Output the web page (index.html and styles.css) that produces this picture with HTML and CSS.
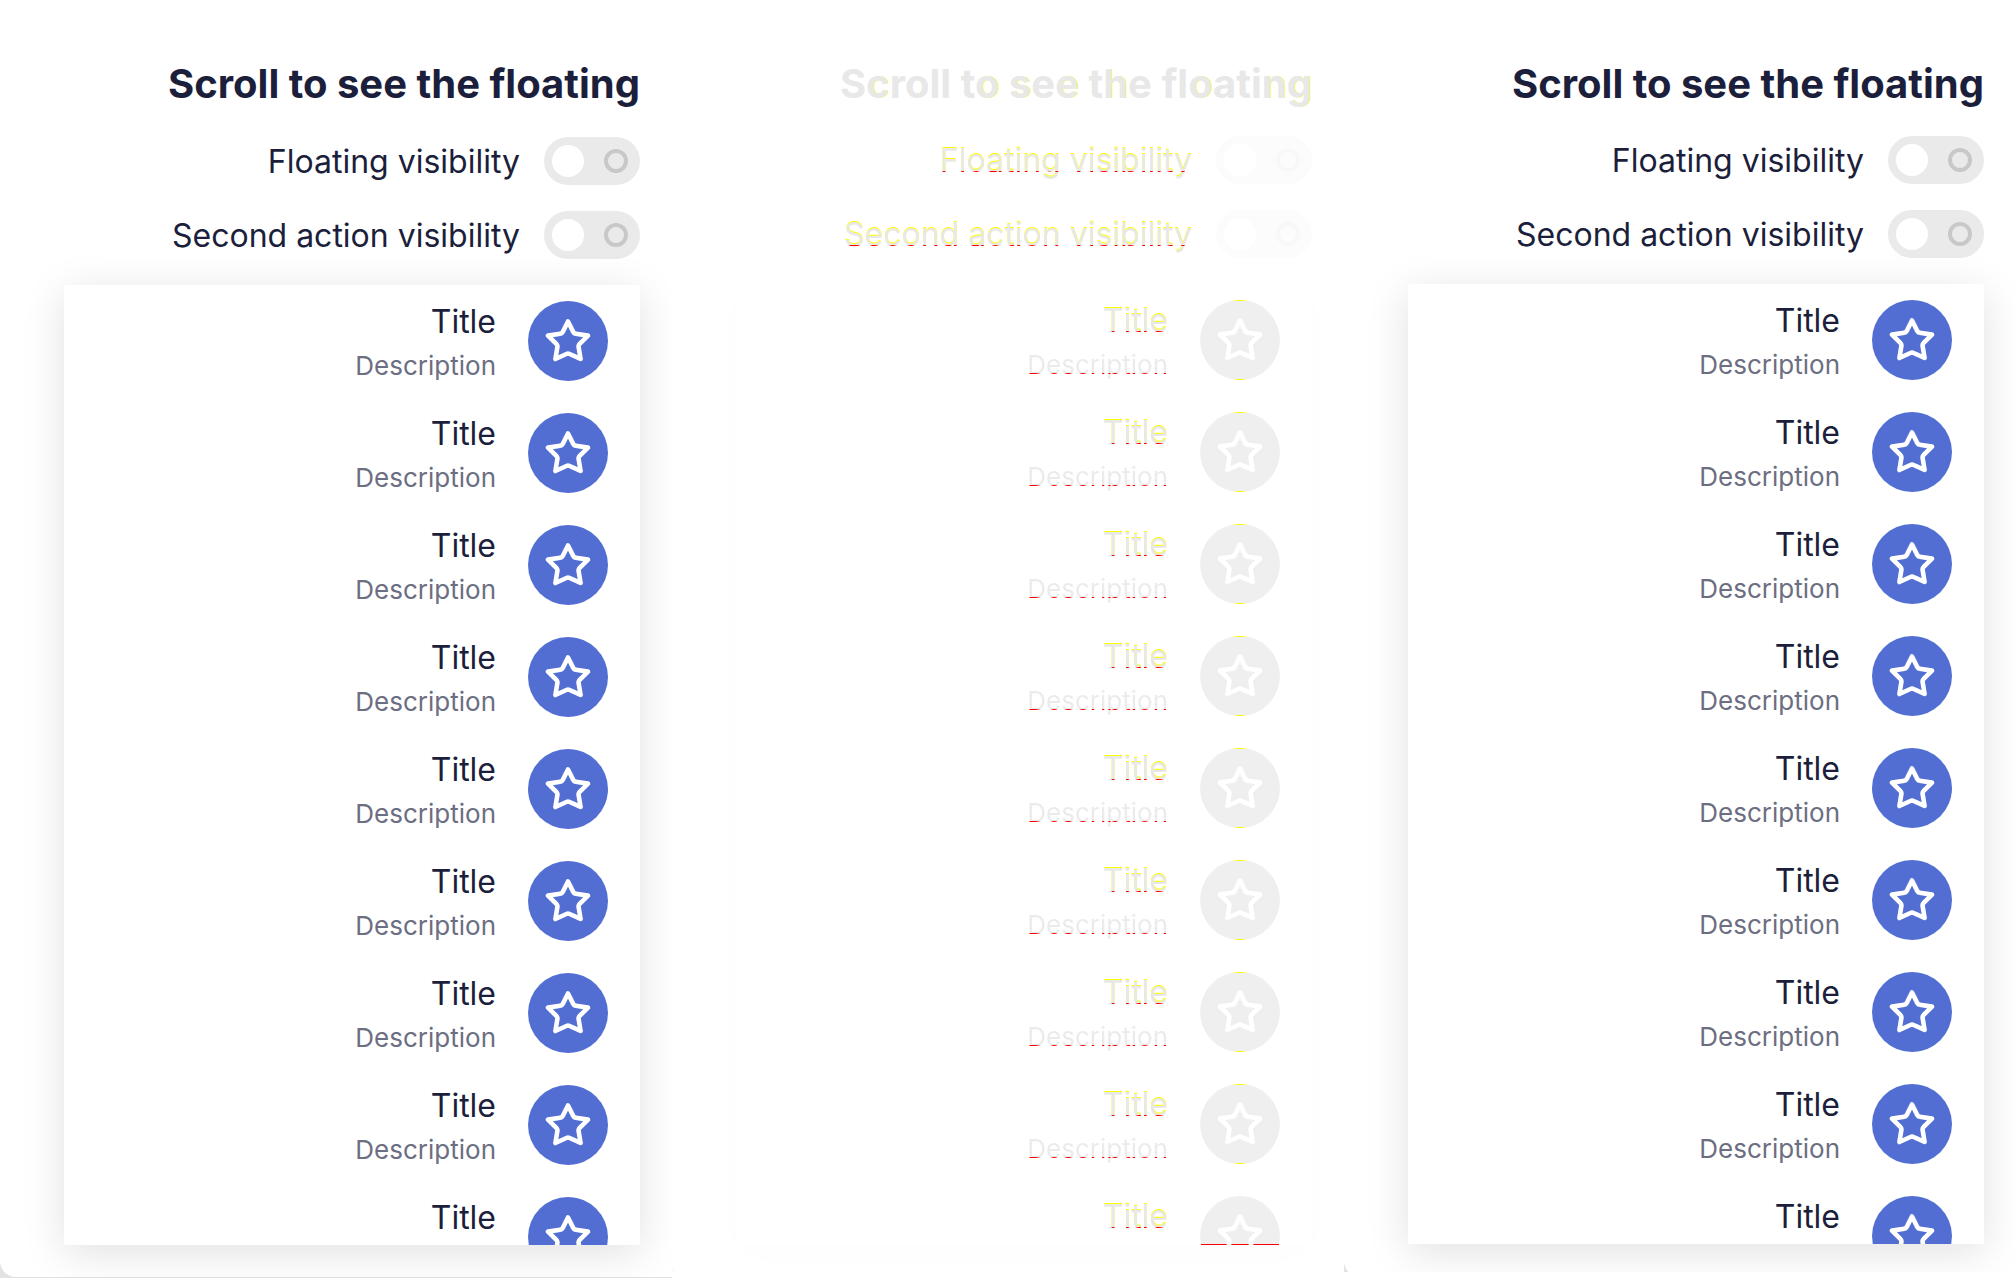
FILE: index.html
```html
<!DOCTYPE html>
<html lang="en">
<head>
<meta charset="utf-8">
<title>Floating action list comparison</title>
<link rel="stylesheet" href="styles.css">
</head>
<body>
<svg class="defs" aria-hidden="true">
  <symbol id="star" viewBox="0 0 80 80">
    <path d="M40 20.5 L45.4 31.2 Q46.2 32.6 47.8 32.8 L60 34.6 L51.4 43.2 Q50.4 44.4 50.6 45.8 L52.6 58 L41.6 53 Q40 52.3 38.4 53 L27.4 58 L29.4 45.8 Q29.6 44.4 28.6 43.2 L20 34.6 L32.2 32.8 Q33.8 32.6 34.6 31.2 Z" fill="none" stroke="currentColor" stroke-width="4.6" stroke-linejoin="round"/>
  </symbol>
</svg>
<main class="board">
  <section class="panel panel-before">
    <div class="sheet">
      <h2 class="heading">Scroll to see the floating</h2>
      <div class="options">
        <label class="option"><span class="option-text">Floating visibility</span><input type="checkbox" class="switch"></label>
        <label class="option"><span class="option-text">Second action visibility</span><input type="checkbox" class="switch"></label>
      </div>
      <ul class="list"></ul>
    </div>
  </section>
  <section class="panel panel-diff">
    <div class="sheet">
      <h2 class="heading">S<i>c</i>roll t<i>o</i> <i>s</i>e<i>e</i> t<i>h</i>e fl<i>o</i>ati<i>ng</i></h2>
      <div class="options">
        <label class="option"><span class="option-text">Floating visibility</span><input type="checkbox" class="switch"></label>
        <label class="option"><span class="option-text">Second action visibility</span><input type="checkbox" class="switch"></label>
      </div>
      <ul class="list"></ul>
    </div>
  </section>
  <section class="panel panel-after">
    <div class="sheet">
      <h2 class="heading">Scroll to see the floating</h2>
      <div class="options">
        <label class="option"><span class="option-text">Floating visibility</span><input type="checkbox" class="switch"></label>
        <label class="option"><span class="option-text">Second action visibility</span><input type="checkbox" class="switch"></label>
      </div>
      <ul class="list"></ul>
    </div>
  </section>
</main>
<script src="list.js"></script>
</body>
</html>
```
FILE: styles.css
```css
*, *::before, *::after { box-sizing: border-box; }

body {
  margin: 0;
  background: #fff;
  color: #1c1f3b;
  font-family: Inter, "Liberation Sans", sans-serif;
  overflow: hidden;
}

.defs { display: none; }

.board {
  display: grid;
  grid-template-columns: repeat(3, minmax(0, 1fr));
  height: 100vh;
}

.panel {
  height: calc(100vh - 6px);
  overflow: hidden;
  background: #e2e2e2;
}
.panel-before { height: 100vh; }
.panel-diff { background: #fcfcfc; }

.sheet {
  display: flex;
  flex-direction: column;
  height: calc(100vh - 1px);
  padding: 60px 32px 33px 64px;
  border-radius: 0 0 0 16px;
  background: #fff;
}
.panel-before .sheet { padding-bottom: 32px; }

.heading {
  margin: 0 0 28px;
  font-size: 40px;
  line-height: 48px;
  font-weight: 700;
  text-align: right;
  white-space: nowrap;
}
.panel-before .heading { margin-bottom: 29px; }
.heading i { font-style: normal; }

.options {
  display: flex;
  flex-direction: column;
  gap: 26px;
  margin-bottom: 26px;
}

.option {
  display: flex;
  align-items: center;
  justify-content: flex-end;
  gap: 24px;
  font-size: 32px;
  line-height: 40px;
  white-space: nowrap;
}
.option-text { padding-top: 2px; }

.switch {
  appearance: none;
  display: flex;
  align-items: center;
  justify-content: space-between;
  width: 96px;
  height: 48px;
  margin: 0;
  padding: 0 12px 0 8px;
  border-radius: 24px;
  background: #eaeaea;
}
.switch::before {
  content: "";
  width: 32px;
  height: 32px;
  border-radius: 50%;
  background: #fff;
}
.switch::after {
  content: "";
  width: 24px;
  height: 24px;
  border: 4px solid #c8c8c8;
  border-radius: 50%;
}

.list {
  flex: 1;
  min-height: 0;
  margin: 0;
  padding: 16px 32px;
  list-style: none;
  overflow-y: auto;
  scrollbar-width: none;
  background: #fff;
  box-shadow: 0 8px 40px rgba(0, 0, 0, 0.12);
}

.row {
  display: flex;
  justify-content: flex-end;
  gap: 32px;
  height: 80px;
  margin-bottom: 32px;
}
.row-text {
  display: flex;
  flex-direction: column;
  gap: 8px;
  padding-top: 1px;
  text-align: right;
}
.row-title { font-size: 32px; line-height: 40px; }
.row-description { font-size: 26px; line-height: 32px; color: #6c6e82; }

.badge {
  width: 80px;
  height: 80px;
  border-radius: 50%;
  background: #526ed3;
  color: #fff;
}
.star { display: block; width: 80px; height: 80px; }

/* Difference panel: faded content with changed pixels in yellow and red */
.panel-diff .sheet { padding-bottom: 32px; }
.panel-diff .heading { color: #e8e8e8; }
.panel-diff .heading i { text-shadow: 1px 0 0 rgba(255, 255, 0, 0.6); }
.panel-diff .option-text,
.panel-diff .row-title,
.panel-diff .row-description {
  color: transparent;
  -webkit-background-clip: text;
  background-clip: text;
}
.panel-diff .option-text {
  background-image: linear-gradient(#e8e8e8 32px, #ff0000 32px, #ff0000 33px, #e8e8e8 33px);
  filter: drop-shadow(0 -1px 0 #ffff00);
}
.panel-diff .row-title {
  background-image: linear-gradient(#e8e8e8 30px, #ff0000 30px, #ff0000 31px, #e8e8e8 31px);
  filter: drop-shadow(0 -1px 0 #ffff00);
}
.panel-diff .row-description {
  background-image: linear-gradient(#ebebeb 24px, #ff0000 24px, #ff0000 25px, #ebebeb 25px);
}
.panel-diff .switch { background: #fcfcfc; }
.panel-diff .switch::after { border-color: #f8f8f8; }
.panel-diff .list { box-shadow: 0 8px 40px rgba(0, 0, 0, 0.01); }
.panel-diff .badge {
  background: linear-gradient(#ffff00 1px, #efefef 1px, #efefef 79px, #ffff00 79px);
}
.panel-diff .row:last-child .badge {
  background: linear-gradient(#efefef 48px, #ff0000 48px);
}
```
FILE: list.js
```js
const rowMarkup = (description) => `
  <li class="row">
    <div class="row-text">
      <span class="row-title">Title</span>
      ${description ? `<span class="row-description">${description}</span>` : ''}
    </div>
    <div class="badge"><svg class="star" aria-hidden="true"><use href="#star"/></svg></div>
  </li>`;

document.querySelectorAll('.list').forEach((list) => {
  list.innerHTML = rowMarkup('Description').repeat(8) + rowMarkup('');
});
```
